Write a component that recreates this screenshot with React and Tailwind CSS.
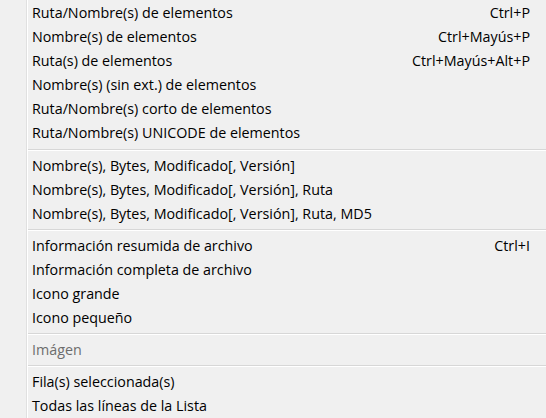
import React from "react";

const groups = [
  [
    ["Ruta/Nombre(s) de elementos", "Ctrl+P"],
    ["Nombre(s) de elementos", "Ctrl+Mayús+P"],
    ["Ruta(s) de elementos", "Ctrl+Mayús+Alt+P"],
    ["Nombre(s) (sin ext.) de elementos"],
    ["Ruta/Nombre(s) corto de elementos"],
    ["Ruta/Nombre(s) UNICODE de elementos"],
  ],
  [
    ["Nombre(s), Bytes, Modificado[, Versión]"],
    ["Nombre(s), Bytes, Modificado[, Versión], Ruta"],
    ["Nombre(s), Bytes, Modificado[, Versión], Ruta, MD5"],
  ],
  [
    ["Información resumida de archivo", "Ctrl+I"],
    ["Información completa de archivo"],
    ["Icono grande"],
    ["Icono pequeño"],
  ],
  [["Imágen", null, true]],
  [["Fila(s) seleccionada(s)"], ["Todas las líneas de la Lista"]],
];

function Item({ label, shortcut, disabled }) {
  return (
    <div
      className={`flex h-[24px] items-center justify-between pl-[4px] pr-[16px] pt-px leading-[23px] ${
        disabled ? "text-[#6d6d6d]" : "text-black"
      }`}
    >
      <span>{label}</span>
      {shortcut && <span>{shortcut}</span>}
    </div>
  );
}

function Separator({ first }) {
  return (
    <div className={`flex flex-col ${first ? "h-[9px] pt-[5px]" : "h-[8px] pt-[4px]"}`}>
      <div className="h-px bg-[#d7d7d7]" />
      <div className="h-px bg-white" />
    </div>
  );
}

export default function App() {
  return (
    <div
      className="flex h-[418px] w-[546px] overflow-hidden bg-[#f0f0f0] text-[14.3px]"
      style={{ fontFamily: '"Open Sans", "Noto Sans", sans-serif' }}
    >
      <div className="w-[26px]" />
      <div className="w-px bg-[#e0e0e0]" />
      <div className="w-px bg-white" />
      <div className="flex flex-1 flex-col">
        {groups.map((g, gi) => (
          <React.Fragment key={gi}>
            {gi > 0 && <Separator first={gi === 1} />}
            {g.map(([label, shortcut, disabled]) => (
              <Item key={label} label={label} shortcut={shortcut} disabled={disabled} />
            ))}
          </React.Fragment>
        ))}
      </div>
    </div>
  );
}
